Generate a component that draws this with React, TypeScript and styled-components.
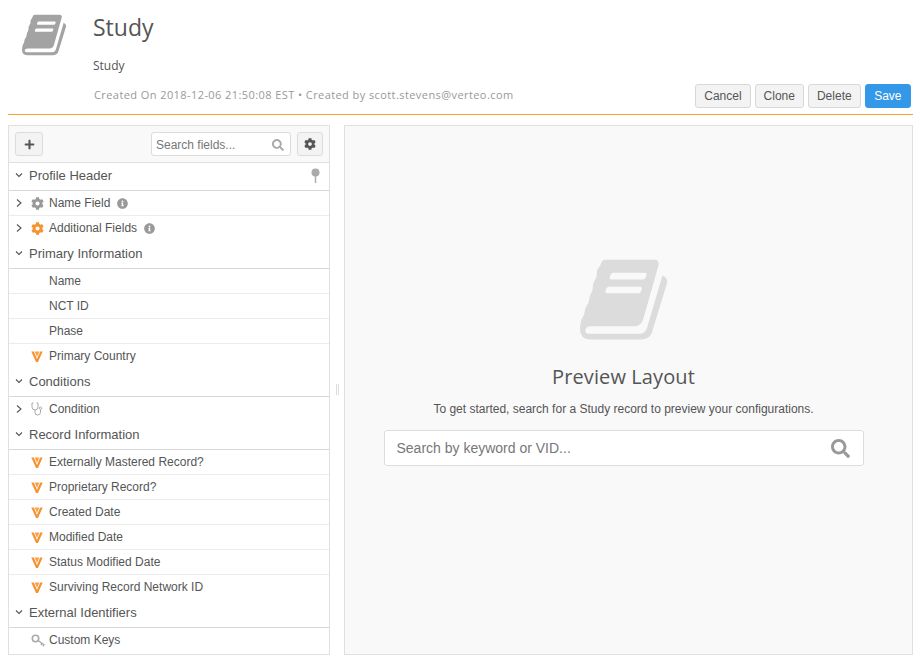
import React from "react";
import styled, { createGlobalStyle } from "styled-components";
import { FaCog, FaInfoCircle, FaPlus, FaSearch } from "react-icons/fa";

const GlobalStyle = createGlobalStyle`
  html, body {
    margin: 0;
    padding: 0;
    background: #fff;
    font-family: "Liberation Sans", Arial, sans-serif;
    color: #555;
  }
  #root { width: 920px; height: 659px; overflow: hidden; }
`;

const Page = styled.div`
  width: 920px;
  height: 659px;
  padding: 0 7px 0 8px;
  box-sizing: border-box;
  display: flex;
  flex-direction: column;
`;

const Header = styled.header`
  height: 115px;
  box-sizing: border-box;
  border-bottom: 1px solid #f7a030;
  display: grid;
  grid-template-columns: 85px 1fr auto;
  flex-shrink: 0;
`;

const HeaderIcon = styled.div`
  padding: 14px 0 0 14px;
`;

const HeaderText = styled.div`
  display: flex;
  flex-direction: column;
  font-family: "Open Sans", sans-serif;
`;

const Title = styled.h1`
  margin: 11px 0 0;
  font-size: 23px;
  line-height: 32px;
  font-weight: 400;
  color: #555;
`;

const Subtitle = styled.div`
  margin-top: 14px;
  font-size: 12px;
  line-height: 17px;
  color: #555;
`;

const Meta = styled.div`
  margin: 13px 0 0 1px;
  font-size: 11px;
  line-height: 15px;
  letter-spacing: 0.42px;
  color: #999;
`;

const Actions = styled.div`
  display: flex;
  align-items: flex-end;
  gap: 4px;
  padding: 0 2px 6px 0;
`;

const Button = styled.button<{ $primary?: boolean }>`
  height: 24px;
  padding: 0 ${(p) => (p.$primary ? 8.5 : 8)}px;
  border-radius: 3px;
  border: 1px solid ${(p) => (p.$primary ? "#3498e8" : "#d8d8d8")};
  background: ${(p) => (p.$primary ? "#3498e8" : "#f3f3f3")};
  color: ${(p) => (p.$primary ? "#fff" : "#555")};
  font: 12px "Liberation Sans", Arial, sans-serif;
`;

const Body = styled.div`
  flex: 1;
  display: grid;
  grid-template-columns: 322px 14px 569px;
  padding-top: 10px;
  padding-bottom: 4px;
  min-height: 0;
`;

const Sidebar = styled.aside`
  border: 1px solid #e0e0e0;
  box-sizing: border-box;
  display: flex;
  flex-direction: column;
`;

const Toolbar = styled.div`
  height: 37px;
  flex-shrink: 0;
  box-sizing: border-box;
  background: #f9f9f9;
  border-bottom: 1px solid #e0e0e0;
  display: flex;
  align-items: center;
  padding: 0 6px;
`;

const IconButton = styled.button<{ $narrow?: boolean }>`
  width: ${(p) => (p.$narrow ? 26 : 28)}px;
  height: 24px;
  padding: 0;
  border: 1px solid #dcdcdc;
  border-radius: 3px;
  background: #f3f3f3;
  color: #555;
  display: flex;
  align-items: center;
  justify-content: center;
`;

const FieldSearch = styled.div`
  margin-left: auto;
  margin-right: 6px;
  width: 140px;
  height: 24px;
  box-sizing: border-box;
  border: 1px solid #dcdcdc;
  border-radius: 3px;
  background: #fff;
  display: flex;
  align-items: center;
  justify-content: space-between;
  padding: 1px 6px 0 4px;
  font-size: 12px;
  color: #777;
`;

const SectionRow = styled.div`
  height: 28px;
  box-sizing: border-box;
  flex-shrink: 0;
  border-bottom: 1px solid #d8d8d8;
  display: flex;
  align-items: center;
  padding: 0 9px 3px 5px;
  font-size: 13px;
  color: #555;
`;

const SectionLabel = styled.span`
  margin-left: 5px;
  flex: 1;
`;

const FieldRow = styled.div<{ $last?: boolean }>`
  height: 25px;
  box-sizing: border-box;
  flex-shrink: 0;
  border-bottom: 1px solid ${(p) => (p.$last ? "transparent" : "#ececec")};
  display: grid;
  grid-template-columns: 17px 18px auto 1fr;
  align-items: center;
  padding-left: 5px;
  font-size: 12px;
  color: #555;
`;

const Slot = styled.span`
  display: flex;
  align-items: center;
`;

const InfoSlot = styled.span`
  display: flex;
  align-items: center;
  margin-left: 7px;
  color: #999;
`;

const Splitter = styled.div`
  display: flex;
  align-items: center;
  justify-content: center;
  gap: 1px;
  padding-bottom: 1px;
`;

const SplitterLine = styled.span`
  width: 1px;
  height: 11px;
  background: #dcdcdc;
`;

const Preview = styled.main`
  border: 1px solid #e0e0e0;
  box-sizing: border-box;
  background: #f9f9f9;
  display: flex;
  flex-direction: column;
  align-items: center;
  padding: 132px 10px 0 0;
`;

const PreviewArt = styled.div`
  margin-left: 2px;
  display: flex;
`;

const PreviewTitle = styled.h2`
  margin: 24px 0 0;
  font-family: "Open Sans", sans-serif;
  font-size: 20px;
  line-height: 26px;
  letter-spacing: 0.1px;
  font-weight: 400;
  color: #555;
`;

const PreviewHint = styled.p`
  margin: 11px 0 0;
  font-size: 12px;
  line-height: 16px;
  color: #555;
`;

const RecordSearch = styled.div`
  margin-top: 13px;
  width: 480px;
  height: 36px;
  box-sizing: border-box;
  background: #fff;
  border: 1px solid #dcdcdc;
  border-radius: 3px;
  display: flex;
  align-items: center;
  justify-content: space-between;
  padding: 0 13px 0 12px;
  font-size: 14px;
  color: #777;
`;

const BOOK =
  "M195 60H345Q362 60 358 78L312 240Q306 262 285 262H155Q138 262 136 274Q135 285 150 285H300Q318 285 324 265L370 108Q385 115 385 128L338 282Q330 302 305 302H150Q120 302 120 270Q120 255 125 240L132 228L136 208L146 190L150 170L158 152L160 132L170 112L172 92L182 76Q186 60 195 60ZM220 100Q214 100 212 108L210 114Q209 120 215 120H312Q318 120 320 112L322 106Q323 100 317 100ZM207 142Q201 142 199 150L197 156Q196 162 202 162H298Q304 162 306 154L308 148Q309 142 303 142Z";

const BookIcon = ({ size, color }: { size: number; color: string }) => (
  <svg width={size} height={(size * 250) / 270} viewBox="120 55 270 250">
    <path d={BOOK} fill={color} fillRule="evenodd" />
  </svg>
);

const ChevronDown = () => (
  <svg width="10" height="10" viewBox="0 0 10 10">
    <path d="M2 3.5 5 6.5 8 3.5" fill="none" stroke="#555" strokeWidth="1.1" />
  </svg>
);

const ChevronRight = () => (
  <svg width="10" height="10" viewBox="0 0 10 10">
    <path d="M3 1.5 7 5 3 8.5" fill="none" stroke="#555" strokeWidth="1.1" />
  </svg>
);

const VeevaIcon = () => (
  <svg width="12" height="13" viewBox="0 0 12 13">
    <path d="M0.3 1.5H2.8L6 9 9.2 1.5H11.7L7 12H5Z" fill="#f59331" />
    <path d="M3.6 1.5H8.4L6 7Z" fill="#f7a24d" />
  </svg>
);

const Stethoscope = () => (
  <svg width="13" height="14" viewBox="0 0 13 14" fill="none" stroke="#aaa" strokeWidth="1">
    <path d="M2.5 1H1V5Q1 8 4 8T7 5V1H5.5" />
    <path d="M4 8V10.5Q4 13 6.7 13T9.5 10.5V7.5" />
    <circle cx="9.5" cy="6.2" r="1.2" />
  </svg>
);

const KeyIcon = () => (
  <svg width="15" height="13" viewBox="0 0 15 13" fill="none">
    <circle cx="4.5" cy="4.5" r="3.2" stroke="#aaa" strokeWidth="1.6" />
    <path d="M7 6.5 13.5 11M11 9.5 10 11M13 10.8 12 12.3" stroke="#aaa" strokeWidth="1.4" />
  </svg>
);

const PinIcon = () => (
  <svg width="9" height="15" viewBox="0 0 9 15">
    <circle cx="4.5" cy="4.5" r="4" fill="#aaa" />
    <rect x="3.8" y="8" width="1.4" height="7" fill="#aaa" />
  </svg>
);

type Field = { label: string; icon?: React.ReactNode; expand?: boolean; info?: boolean };
type Section = { title: string; pin?: boolean; fields: Field[] };

const veeva = <VeevaIcon />;

const SECTIONS: Section[] = [
  {
    title: "Profile Header",
    pin: true,
    fields: [
      { label: "Name Field", expand: true, info: true, icon: <FaCog size={13} color="#999" /> },
      { label: "Additional Fields", expand: true, info: true, icon: <FaCog size={13} color="#f59331" /> },
    ],
  },
  {
    title: "Primary Information",
    fields: [
      { label: "Name" },
      { label: "NCT ID" },
      { label: "Phase" },
      { label: "Primary Country", icon: veeva },
    ],
  },
  {
    title: "Conditions",
    fields: [{ label: "Condition", expand: true, icon: <Stethoscope /> }],
  },
  {
    title: "Record Information",
    fields: [
      { label: "Externally Mastered Record?", icon: veeva },
      { label: "Proprietary Record?", icon: veeva },
      { label: "Created Date", icon: veeva },
      { label: "Modified Date", icon: veeva },
      { label: "Status Modified Date", icon: veeva },
      { label: "Surviving Record Network ID", icon: veeva },
    ],
  },
  {
    title: "External Identifiers",
    fields: [{ label: "Custom Keys", icon: <KeyIcon /> }],
  },
];

export default function App() {
  return (
    <Page>
      <GlobalStyle />
      <Header>
        <HeaderIcon>
          <BookIcon size={45} color="#a3a3a3" />
        </HeaderIcon>
        <HeaderText>
          <Title>Study</Title>
          <Subtitle>Study</Subtitle>
          <Meta>Created On 2018-12-06 21:50:08 EST • Created by scott.stevens@verteo.com</Meta>
        </HeaderText>
        <Actions>
          <Button>Cancel</Button>
          <Button>Clone</Button>
          <Button>Delete</Button>
          <Button $primary>Save</Button>
        </Actions>
      </Header>
      <Body>
        <Sidebar>
          <Toolbar>
            <IconButton>
              <FaPlus size={11} />
            </IconButton>
            <FieldSearch>
              <span>Search fields...</span>
              <FaSearch size={12} color="#aaa" />
            </FieldSearch>
            <IconButton $narrow>
              <FaCog size={12} />
            </IconButton>
          </Toolbar>
          {SECTIONS.map((section) => (
            <React.Fragment key={section.title}>
              <SectionRow>
                <ChevronDown />
                <SectionLabel>{section.title}</SectionLabel>
                {section.pin && <PinIcon />}
              </SectionRow>
              {section.fields.map((field, i) => (
                <FieldRow key={field.label} $last={i === section.fields.length - 1}>
                  <Slot>{field.expand && <ChevronRight />}</Slot>
                  <Slot>{field.icon}</Slot>
                  <span>{field.label}</span>
                  {field.info && (
                    <InfoSlot>
                      <FaInfoCircle size={11} />
                    </InfoSlot>
                  )}
                </FieldRow>
              ))}
            </React.Fragment>
          ))}
        </Sidebar>
        <Splitter>
          <SplitterLine />
          <SplitterLine />
        </Splitter>
        <Preview>
          <PreviewArt>
            <BookIcon size={89} color="#dcdcdc" />
          </PreviewArt>
          <PreviewTitle>Preview Layout</PreviewTitle>
          <PreviewHint>To get started, search for a Study record to preview your configurations.</PreviewHint>
          <RecordSearch>
            <span>Search by keyword or VID...</span>
            <FaSearch size={19} color="#999" />
          </RecordSearch>
        </Preview>
      </Body>
    </Page>
  );
}
